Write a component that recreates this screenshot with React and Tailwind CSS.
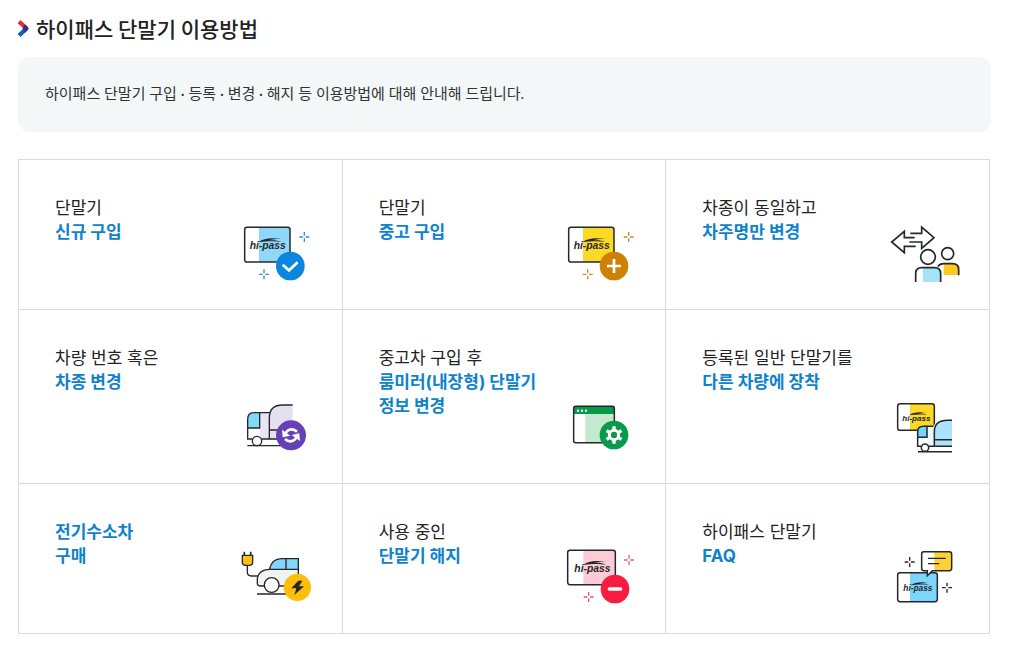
import React from 'react'

const INK = '#25272b'

function Sparkle({ x, y, color }) {
  return (
    <path
      d={`M${x} ${y - 15}v11M${x} ${y + 4}v11M${x - 15} ${y}h11M${x + 4} ${y}h11`}
      stroke={color}
      strokeWidth="4"
      fill="none"
    />
  )
}

// hi-pass wordmark with the swoosh over the letters
function Wordmark({ x, y, size = 32 }) {
  return (
    <g transform={`translate(${x} ${y})`} fill={INK}>
      <text
        fontFamily="'Liberation Sans', sans-serif"
        fontStyle="italic"
        fontWeight="700"
        fontSize={size}
      >
        hi-pass
      </text>
      <path transform={`scale(${size / 32})`} d="M28 -22C44 -35 66 -36 99 -32C80 -32 68 -31 60 -28C74 -29 88 -28 98 -23C78 -26 50 -25 28 -22Z" />
    </g>
  )
}

function Card({ x, y, w = 136, h = 104, split = 43, color }) {
  return (
    <g>
      <rect x={x} y={y} width={w} height={h} rx="7" fill="#fff" />
      <path d={`M${x + split} ${y}h${w - split - 6}q6 0 6 6v${h - 12}q0 6 -6 6h${6 + split - w}z`} fill={color} />
      <rect x={x} y={y} width={w} height={h} rx="7" fill="none" stroke={INK} strokeWidth="4.5" />
    </g>
  )
}

function Icon({ viewBox, children }) {
  return (
    <svg viewBox={viewBox} className="mr-6 mb-[18px] h-20 w-20 shrink-0 self-end" fill="none" aria-hidden="true">
      {children}
    </svg>
  )
}

function NewDeviceIcon() {
  return (
    <Icon viewBox="9 -12 240 240">
      <Card x={29} y={37} color="#8fd8fb" />
      <Wordmark x={44} y={103} size={31} />
      <circle cx="166" cy="153" r="43" fill="#0b86dc" />
      <path d="M143 149l19 17 26-24" stroke="#fff" strokeWidth="8" />
      <Sparkle x={208} y={66} color="#2f8fca" />
      <Sparkle x={87} y={178} color="#2f8fca" />
    </Icon>
  )
}

function UsedDeviceIcon() {
  return (
    <Icon viewBox="18 -12 240 240">
      <Card x={41} y={37} color="#fcd925" />
      <Wordmark x={56} y={103} size={31} />
      <circle cx="177" cy="153" r="43" fill="#cd8106" />
      <path d="M177 132v42M156 153h42" stroke="#fff" strokeWidth="8" />
      <Sparkle x={221} y={66} color="#c58b2c" />
      <Sparkle x={98} y={178} color="#c58b2c" />
    </Icon>
  )
}

function OwnerChangeIcon() {
  return (
    <Icon viewBox="15 -12 240 240">
      <g stroke={INK} strokeWidth="5">
        <path d="M104 68H73V49L35 81L73 113V94H107" />
        <path d="M91 55H125V36L162 68L125 100V81H88" />
        <circle cx="144" cy="126" r="22" fill="#fff" />
        <circle cx="203" cy="116" r="18" fill="#fff" />
      </g>
      <path d="M191 147h33q11 0 11 11v22h-44z" fill="#fdcb20" />
      <path d="M174 155q5-9 17-9h27q18 0 18 18v17" stroke={INK} strokeWidth="5" />
      <path d="M129 159h35q18 0 18 18v24h-53z" fill="#a5e3fb" />
      <path d="M107 201v-25q0-18 18-18h39q18 0 18 18v25" stroke={INK} strokeWidth="5" />
    </Icon>
  )
}

function VehicleChangeIcon() {
  return (
    <Icon viewBox="9 -30 240 240">
      <path d="M103 132V69q0-39 40-39h30v102z" fill="#e5e0f0" />
      <path d="M75 53h28v79H75z" fill="#e9e5f2" />
      <path d="M38 99V73q0-20 18-20h18v46z" fill="#82d9f5" />
      <path d="M53 132H38V73q0-20 18-20h47M38 99h36V54M103 132V69q0-39 40-39h30M79 132h60M103 105h30" stroke={INK} strokeWidth="4" />
      <circle cx="66" cy="138" r="14" fill="#fff" stroke={INK} strokeWidth="4" />
      <path d="M37 152h106" stroke={INK} strokeWidth="4" />
      <circle cx="168" cy="121" r="45" fill="#6541b5" />
      <path d="M152 115C157 103 173 98 186 110M184 127C179 139 163 144 150 132" stroke="#fff" strokeWidth="8" />
      <path d="M141 104l2 23 23-5zM195 138l-2-23-23 5z" fill="#fff" />
    </Icon>
  )
}

function MirrorInfoIcon() {
  return (
    <Icon viewBox="3 -30 240 240">
      <rect x="41" y="34" width="122" height="109" rx="6" fill="#fff" />
      <path d="M76 57h87v86H76z" fill="#c3e9cf" />
      <path d="M41 57V40q0-6 6-6h110q6 0 6 6v17z" fill="#08994a" />
      <rect x="41" y="34" width="122" height="109" rx="6" stroke={INK} strokeWidth="4.5" />
      <g fill="#fff">
        <circle cx="54" cy="47" r="3.5" />
        <circle cx="66" cy="47" r="3.5" />
        <circle cx="78" cy="47" r="3.5" />
      </g>
      <circle cx="162" cy="120" r="43" fill="#08994a" />
      <circle cx="162" cy="120" r="14" stroke="#fff" strokeWidth="9" />
      <path d="M162 94v12M162 134v12M139.5 107l10 6M174 127l10.5 6M139.5 133l10-6M174 113l10.5-6" stroke="#fff" strokeWidth="10" />
    </Icon>
  )
}

function OtherVehicleIcon() {
  return (
    <Icon viewBox="0 -30 240 240">
      <Card x={38} y={26} w={110} h={80} split={37} color="#fcd925" />
      <Wordmark x={52} y={77} size={24} />
      <path d="M98 158v-47q0-17 17-17h30c5-11 20-19 37-19h19v83z" fill="#fff" />
      <path d="M148 154v-50q10-28 40-28h13v78z" fill="#a9e4fb" />
      <path d="M128 94h20v60h-20z" fill="#edf7fc" />
      <path d="M98 127v-17q0-16 17-16h12v33z" fill="#75d5f7" />
      <path d="M108 154H98v-44q0-16 17-16h30M98 127h28V95M148 154v-44q0-34 40-34h13M132 154h69M148 134h53" stroke={INK} strokeWidth="4.5" />
      <circle cx="120" cy="158" r="11" fill="#fff" stroke={INK} strokeWidth="4.5" />
      <path d="M99 170h102" stroke={INK} strokeWidth="4.5" />
    </Icon>
  )
}

function ElectricIcon() {
  return (
    <Icon viewBox="9 -15 240 240">
      <path d="M28 35v12M47 35v12" stroke={INK} strokeWidth="5" />
      <path d="M22 46h31v20q0 10-10 10H32q-10 0-10-10z" fill="#fdc20e" stroke={INK} strokeWidth="4" />
      <path d="M37 76v20q0 12 12 12h20" stroke={INK} strokeWidth="4" />
      <path d="M67 132v-18q3-22 35-26h88v50H75q-8 0-8-6z" fill="#f2f2f2" />
      <path d="M103 88q8-32 36-32h51v32z" fill="#83d6fb" />
      <path d="M88 138H75q-8 0-8-8v-15q3-25 36-27h87M103 88q8-32 36-32h51v58M153 56v32M132 138h20M66 162h91" stroke={INK} strokeWidth="4" />
      <circle cx="110" cy="135" r="22" fill="#fff" stroke={INK} strokeWidth="4" />
      <circle cx="187" cy="142" r="41" fill="#fbbf09" />
      <path d="M190 122l-21 23h15l-6 20 29-26h-15l10-17z" fill={INK} />
    </Icon>
  )
}

function CancelDeviceIcon() {
  return (
    <Icon viewBox="18 -15 240 240">
      <Card x={38} y={31} w={143} h={103} split={47} color="#fccbd5" />
      <Wordmark x={58} y={96} size={31} />
      <circle cx="180" cy="147" r="43" fill="#f71c40" />
      <path d="M163 147h34" stroke="#fff" strokeWidth="10" strokeLinecap="round" />
      <Sparkle x={222} y={60} color="#e15b79" />
      <Sparkle x={101} y={171} color="#e15b79" />
    </Icon>
  )
}

function FaqIcon() {
  return (
    <Icon viewBox="0 -15 240 240">
      <Card x={38} y={98} w={119} h={87} split={37} color="#7cd6fb" />
      <Wordmark x={55} y={153} size={25} />
      <path d="M116 35h77q7 0 7 7v43q0 7-7 7h-51l-15 15v-15h-11q-6 0-6-7V42q0-7 6-7z" fill="#fff" />
      <path d="M148 35h45q7 0 7 7v43q0 7-7 7h-45z" fill="#fed234" />
      <path d="M116 35h77q7 0 7 7v43q0 7-7 7h-51l-15 15v-15h-11q-6 0-6-7V42q0-7 6-7z" stroke={INK} strokeWidth="4.5" />
      <path d="M129 55h53M129 71h34" stroke={INK} strokeWidth="4" />
      <Sparkle x={74} y={66} color={INK} />
      <Sparkle x={186} y={143} color={INK} />
    </Icon>
  )
}

const menus = [
  { label: '단말기', strong: ['신규 구입'], icon: NewDeviceIcon },
  { label: '단말기', strong: ['중고 구입'], icon: UsedDeviceIcon },
  { label: '차종이 동일하고', strong: ['차주명만 변경'], icon: OwnerChangeIcon },
  { label: '차량 번호 혹은', strong: ['차종 변경'], icon: VehicleChangeIcon },
  { label: '중고차 구입 후', strong: ['룸미러(내장형) 단말기', '정보 변경'], icon: MirrorInfoIcon },
  { label: '등록된 일반 단말기를', strong: ['다른 차량에 장착'], icon: OtherVehicleIcon },
  { strong: ['전기수소차', '구매'], icon: ElectricIcon },
  { label: '사용 중인', strong: ['단말기 해지'], icon: CancelDeviceIcon },
  { label: '하이패스 단말기', strong: ['FAQ'], icon: FaqIcon },
]

function MenuItem({ label, strong, icon: MenuIcon }) {
  return (
    <li className="border-r border-b border-[#d9d9d9]">
      <a href="#" className="flex h-full">
        <span className="flex-1 pt-9 pb-[65px] pl-9 font-['Inter','Noto_Sans_CJK_KR',sans-serif] text-[17px] leading-6 whitespace-nowrap text-[#222]">
          {label && <span className="block">{label}</span>}
          {strong.map((line) => (
            <strong key={line} className="block font-bold text-[#0f82cc]">{line}</strong>
          ))}
        </span>
        <MenuIcon />
      </a>
    </li>
  )
}

export default function App() {
  return (
    <main className="bg-white px-[18px] pt-4 pb-8 font-['Noto_Sans_CJK_KR',sans-serif]">
      <h2 className="flex items-center gap-[7px] text-[21px] leading-6 font-medium text-[#222]">
        <svg viewBox="0 0 33 52" className="h-[17px] w-[11px]" fill="none" aria-hidden="true">
          <path d="M3 47L26 26" stroke="#0c68b7" strokeWidth="13" />
          <path d="M3 5L26 26" stroke="#e02d30" strokeWidth="13" />
          <path d="M22 14L33 26L22 38L13 26z" fill="#30318b" />
        </svg>
        하이패스 단말기 이용방법
      </h2>

      <p className="mt-[17px] rounded-xl bg-[#f4f7f8] px-[27px] pt-6 pb-[27px] font-['Lato','Noto_Sans_CJK_KR',sans-serif] text-[15px] leading-6 text-[#333]">
        하이패스 단말기 구입 · 등록 · 변경 · 해지 등 이용방법에 대해 안내해 드립니다.
      </p>

      <ul className="mt-[27px] mr-px grid grid-cols-3 border-t border-l border-[#d9d9d9]">
        {menus.map((menu, i) => (
          <MenuItem key={i} {...menu} />
        ))}
      </ul>
    </main>
  )
}
